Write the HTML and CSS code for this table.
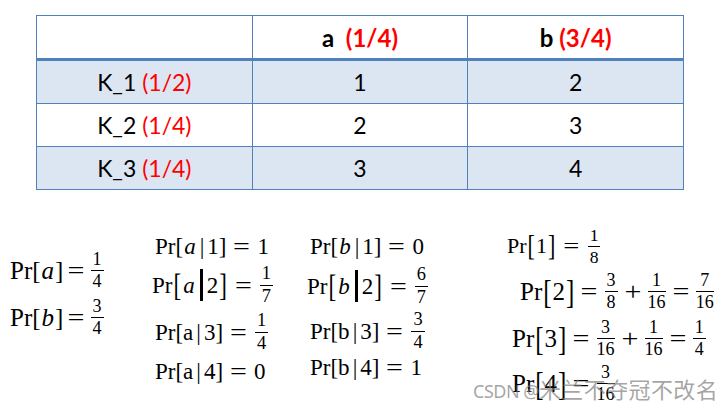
FILE: index.html
```html
<!DOCTYPE html>
<html>
<head>
<meta charset="utf-8">
<link rel="stylesheet" href="styles.css">
</head>
<body>
<div class="page">
  <table class="grid">
    <tr class="head">
      <th></th>
      <th>a&nbsp;&nbsp;<span class="red">(1/4)</span></th>
      <th>b <span class="red">(3/4)</span></th>
    </tr>
    <tr class="shade">
      <td>K_1 <span class="red">(1/2)</span></td><td>1</td><td>2</td>
    </tr>
    <tr>
      <td>K_2 <span class="red">(1/4)</span></td><td>2</td><td>3</td>
    </tr>
    <tr class="shade">
      <td>K_3 <span class="red">(1/4)</span></td><td>3</td><td>4</td>
    </tr>
  </table>

  <div class="math">
    <div class="col col1">
      <div class="eq big">Pr[<i>a</i>]<span class="op">=</span><span class="frac"><span>1</span><span>4</span></span></div>
      <div class="eq big">Pr[<i>b</i>]<span class="op">=</span><span class="frac"><span>3</span><span>4</span></span></div>
    </div>
    <div class="col col2">
      <div class="eq">Pr[<i>a</i><span class="bar">|</span>1]<span class="op">=</span>1</div>
      <div class="eq shift-l">Pr<span class="tall">[</span><i>a</i><span class="vbar"></span>2<span class="tall">]</span><span class="op">=</span><span class="frac"><span>1</span><span>7</span></span></div>
      <div class="eq">Pr[a<span class="bar">|</span>3]<span class="op">=</span><span class="frac"><span>1</span><span>4</span></span></div>
      <div class="eq">Pr[a<span class="bar">|</span>4]<span class="op">=</span>0</div>
    </div>
    <div class="col col3">
      <div class="eq">Pr[<i>b</i><span class="bar">|</span>1]<span class="op">=</span>0</div>
      <div class="eq shift-l">Pr<span class="tall">[</span><i>b</i><span class="vbar"></span>2<span class="tall">]</span><span class="op">=</span><span class="frac"><span>6</span><span>7</span></span></div>
      <div class="eq">Pr[b<span class="bar">|</span>3]<span class="op">=</span><span class="frac"><span>3</span><span>4</span></span></div>
      <div class="eq">Pr[b<span class="bar">|</span>4]<span class="op">=</span>1</div>
    </div>
    <div class="col col4">
      <div class="eq">Pr<span class="tall">[</span>1<span class="tall">]</span><span class="op">=</span><span class="frac"><span>1</span><span>8</span></span></div>
      <div class="eq lg in2">Pr<span class="tall">[</span>2<span class="tall">]</span><span class="op">=</span><span class="frac"><span>3</span><span>8</span></span><span class="op">+</span><span class="frac"><span>1</span><span>16</span></span><span class="op">=</span><span class="frac"><span>7</span><span>16</span></span></div>
      <div class="eq lg in3">Pr<span class="tall">[</span>3<span class="tall">]</span><span class="op">=</span><span class="frac"><span>3</span><span>16</span></span><span class="op">+</span><span class="frac"><span>1</span><span>16</span></span><span class="op">=</span><span class="frac"><span>1</span><span>4</span></span></div>
      <div class="eq lg in3">Pr<span class="tall">[</span>4<span class="tall">]</span><span class="op">=</span><span class="frac"><span>3</span><span>16</span></span></div>
    </div>
  </div>

  <div class="watermark"><span class="wm-latin">CSDN @</span>米兰不夺冠不改名</div>
</div>
</body>
</html>
```

FILE: styles.css
```css
html, body {
  margin: 0;
  padding: 0;
  background: #ffffff;
}

.page {
  position: relative;
  width: 728px;
  height: 409px;
  overflow: hidden;
  padding-top: 15px;
  box-sizing: border-box;
}

.grid {
  margin-left: 36px;
  border-collapse: collapse;
  width: 648px;
  font-family: Lato, "Noto Sans", sans-serif;
  font-size: 23px;
  color: #000;
  table-layout: fixed;
}

.grid th,
.grid td {
  border: 1px solid #4f81bd;
  text-align: center;
  padding: 0;
  font-weight: normal;
}

.grid th {
  font-weight: bold;
  font-size: 24px;
  height: 42px;
  border-bottom: 3px solid #4f81bd;
}

.grid td {
  height: 42px;
}

.grid .shade td {
  background: #dce6f2;
}

.red {
  color: #ff0000;
}

/* math area */
.math {
  display: flex;
  font-family: "Liberation Serif", "Times New Roman", serif;
  color: #000;
  font-size: 23px;
}

.col {
  display: grid;
  align-items: center;
  justify-items: start;
  align-content: start;
}

.col1 {
  width: 142px;
  padding-left: 10px;
  padding-top: 60px;
  grid-template-rows: 40px 54px;
}

.col2 {
  width: 153px;
  padding-left: 3px;
  padding-top: 36px;
  grid-template-rows: 40px 38px 56px 22px;
}

.col3 {
  width: 197px;
  padding-left: 2px;
  padding-top: 36px;
  grid-template-rows: 40px 40px 50px 22px;
}

.col4 {
  padding-top: 36px;
  grid-template-rows: 40px 50px 44px 46px;
}

.eq {
  display: flex;
  align-items: center;
  white-space: pre;
  line-height: 1;
}

.eq.big {
  font-size: 25px;
}

.col4 .eq {
  font-size: 22px;
}

.col4 .eq.lg {
  font-size: 25px;
}

.shift-l {
  margin-left: -3px;
}

.in2 {
  margin-left: 13px;
}

.in3 {
  margin-left: 5px;
}

.eq i {
  font-style: italic;
  padding: 0 1px;
}

.bar {
  padding: 0 3px;
}

.op {
  display: inline-block;
  transform: scaleX(1.3);
  margin: 0 9px;
}

.big .op {
  transform: scaleX(1.2);
  margin: 0 6px;
}

.lg .op {
  transform: scaleX(1.2);
  margin: 0 7px;
}

.tall {
  display: inline-block;
  transform: scaleY(1.35);
  padding: 0 1px;
}

.vbar {
  display: inline-block;
  width: 3px;
  height: 32px;
  background: #000;
  margin: 0 4px;
}

.frac {
  display: inline-flex;
  flex-direction: column;
  align-items: center;
  font-size: 0.8em;
  line-height: 1.05;
  padding: 0 1px;
}

.big .frac {
  font-size: 0.72em;
}

.lg .frac {
  font-size: 0.72em;
}

.frac span:first-child {
  border-bottom: 1px solid #000;
  padding: 0 2px 1px;
  align-self: stretch;
  text-align: center;
}

.frac span:last-child {
  padding-top: 1px;
}

.watermark {
  position: absolute;
  left: 473px;
  top: 377px;
  font-family: "Noto Sans CJK SC", "Noto Sans", sans-serif;
  font-size: 22px;
  line-height: 1;
  letter-spacing: 0.4px;
  color: rgba(125, 125, 125, 0.7);
  white-space: nowrap;
}

.wm-latin {
  font-family: "Noto Sans", sans-serif;
  font-size: 18px;
  letter-spacing: -0.5px;
}
```
